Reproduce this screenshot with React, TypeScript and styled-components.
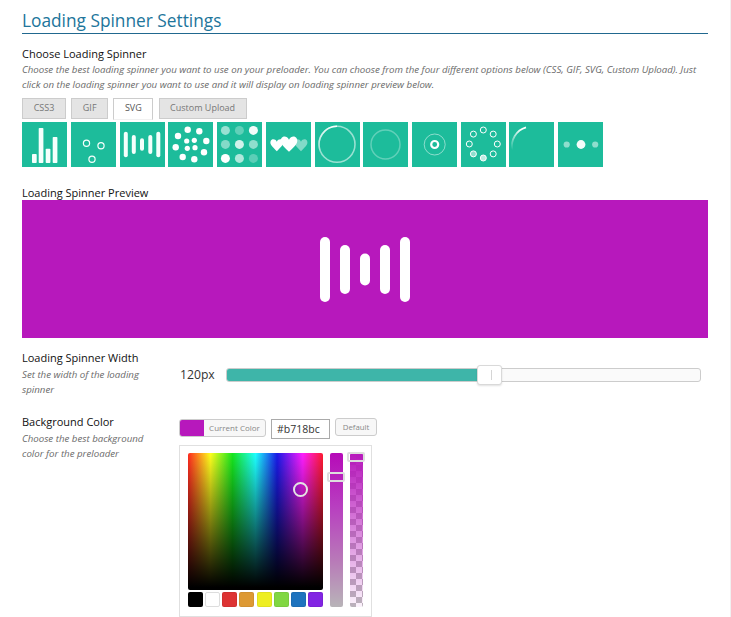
import * as React from 'react';
import styled, { createGlobalStyle } from 'styled-components';

const GlobalStyle = createGlobalStyle`
    html, body {
        margin: 0;
        padding: 0;
        background: #ffffff;
    }
    body {
        font-family: "Open Sans", "Liberation Sans", sans-serif;
        color: #222222;
    }
`;

const Page = styled.div`
    box-sizing: border-box;
    width: 731px;
    height: 617px;
    padding: 11px 22px 0 22px;
    border-right: 1px solid #f1f1f1;
    overflow: hidden;
`;

const Title = styled.h2`
    margin: 0;
    height: 22px;
    border-bottom: 1px solid #21688f;
    font-size: 17.3px;
    font-weight: 400;
    line-height: 20px;
    color: #21759b;
`;

const SectionLabel = styled.h3`
    margin: 12px 0 0;
    font-size: 11px;
    font-weight: 400;
    line-height: 16px;
    color: #111111;
`;

const Hint = styled.p`
    margin: 0;
    font-size: 9.7px;
    font-style: italic;
    line-height: 15px;
    color: #6a6a6a;
`;

const Tabs = styled.div`
    display: flex;
    gap: 5.2px;
    height: 22px;
    margin-top: 6px;
`;

const Tab = styled.div<{ $active?: boolean; $width: number }>`
    box-sizing: border-box;
    width: ${(p) => p.$width}px;
    height: ${(p) => (p.$active ? 22 : 21)}px;
    border: 1px solid #cccccc;
    border-bottom-color: ${(p) => (p.$active ? '#f1f1f1' : '#cccccc')};
    background: ${(p) => (p.$active ? '#ffffff' : '#e4e4e4')};
    font-size: 9px;
    line-height: 17px;
    text-align: center;
    color: ${(p) => (p.$active ? '#555555' : '#777777')};
`;

const SpinnerGrid = styled.div`
    display: flex;
    gap: 3.73px;
    margin: 2px 0 0 0.3px;
`;

const SpinnerTile = styled.svg`
    display: block;
    flex: none;
    width: 45px;
    height: 45px;
    background: #1dbc9b;
`;

const PreviewLabel = styled.h3`
    margin: 19px 0 0;
    font-size: 11px;
    font-weight: 400;
    line-height: 14px;
    color: #111111;
`;

const Preview = styled.div`
    display: flex;
    align-items: center;
    justify-content: center;
    height: 138px;
    background: #b718bc;
`;

const SettingRow = styled.div<{ $top: number }>`
    display: flex;
    margin-top: ${(p) => p.$top}px;
`;

const SettingInfo = styled.div`
    flex: none;
    width: 157px;
`;

const SettingName = styled.h4`
    margin: 0 0 2px;
    font-size: 11px;
    font-weight: 400;
    line-height: 15px;
    color: #111111;
`;

const SettingHint = styled(Hint)`
    width: 130px;
`;

const SliderControl = styled.div`
    display: flex;
    align-items: center;
    gap: 12px;
    flex: 1;
    height: 19px;
    margin: 15px 7px 0 0;
    padding-left: 1px;
`;

const SliderValue = styled.span`
    flex: none;
    width: 34px;
    font-size: 12.2px;
    color: #333333;
`;

const SliderTrack = styled.div`
    position: relative;
    box-sizing: border-box;
    flex: 1;
    height: 14px;
    border: 1px solid #cccccc;
    border-radius: 3px;
    background: #fafafa;
`;

const SliderFill = styled.div`
    height: 100%;
    border-radius: 2px 0 0 2px;
    background: #3eb5a9;
`;

const SliderThumb = styled.div`
    position: absolute;
    top: -4px;
    box-sizing: border-box;
    width: 25px;
    height: 20px;
    border: 1px solid #d9d9d9;
    border-radius: 3px;
    background: #ffffff;
    box-shadow: 0 1px 2px rgba(0, 0, 0, 0.12);

    &::after {
        content: '';
        position: absolute;
        left: 13px;
        top: 4px;
        width: 1px;
        height: 10px;
        background: #d5d5d5;
    }
`;

const ColorColumn = styled.div`
    flex: none;
    width: 200px;
    padding-top: 4px;
`;

const ColorTopRow = styled.div`
    display: flex;
    align-items: flex-start;
    gap: 5px;
    height: 27px;
`;

const CurrentColor = styled.div`
    box-sizing: border-box;
    display: flex;
    width: 87px;
    height: 18px;
    margin-top: 1px;
    border: 1px solid #cccccc;
    border-radius: 3px;
    background: #f7f7f7;
    overflow: hidden;
`;

const CurrentSwatch = styled.div`
    flex: none;
    width: 24px;
    background: #b718bc;
`;

const CurrentText = styled.span`
    flex: 1;
    font-size: 8px;
    line-height: 16px;
    text-align: center;
    color: #888888;
`;

const HexField = styled.div`
    box-sizing: border-box;
    width: 59px;
    height: 20px;
    margin-top: 1px;
    padding-left: 5px;
    border: 1px solid #aaaaaa;
    font-size: 10.5px;
    line-height: 18px;
    color: #333333;
`;

const DefaultButton = styled.div`
    box-sizing: border-box;
    width: 42px;
    height: 18px;
    border: 1px solid #cccccc;
    border-radius: 3px;
    background: #f7f7f7;
    font-size: 7.8px;
    line-height: 16px;
    text-align: center;
    color: #888888;
`;

const Picker = styled.div`
    box-sizing: border-box;
    display: flex;
    gap: 7px;
    width: 193px;
    height: 172px;
    padding: 7px 8px;
    border: 1px solid #e0e0e0;
`;

const PickerMain = styled.div`
    display: flex;
    flex-direction: column;
    gap: 2px;
    width: 136px;
`;

const ColorField = styled.div`
    position: relative;
    height: 137px;
    border-radius: 2px;
    background:
        linear-gradient(to bottom, rgba(0, 0, 0, 0) 0%, rgba(0, 0, 0, 0.45) 45%, #000000 98%),
        linear-gradient(to right, #ff2a20 0%, #ffff1e 16.6%, #16e61e 33%, #1effff 50%, #1a1ae8 66%, #ff1eff 85%, #ff1a30 100%);
`;

const FieldRing = styled.div`
    position: absolute;
    left: 105px;
    top: 29px;
    box-sizing: border-box;
    width: 15px;
    height: 15px;
    border: 2px solid #e4e4e4;
    border-radius: 50%;
`;

const Swatches = styled.div`
    display: flex;
    justify-content: space-between;
`;

const Swatch = styled.div<{ $color: string }>`
    box-sizing: border-box;
    width: 15px;
    height: 15px;
    border: 1px solid rgba(0, 0, 0, 0.06);
    border-radius: 2px;
    background: ${(p) => p.$color};
`;

const WhiteSwatch = styled(Swatch)`
    border-color: #dddddd;
`;

const VerticalBar = styled.div`
    position: relative;
    flex: none;
    width: 13px;
    height: 154px;
    border-radius: 2px;
`;

const LightnessBar = styled(VerticalBar)`
    background: linear-gradient(to bottom, #b60ab8 0%, #b83fc0 35%, #b87ab8 70%, #b8b4b8 100%);
`;

const AlphaBar = styled(VerticalBar)`
    background:
        linear-gradient(to bottom, rgba(183, 24, 188, 1) 0%, rgba(183, 24, 188, 0.05) 100%),
        repeating-conic-gradient(#bbbbbb 0% 25%, #ffffff 0% 50%) 0 0 / 12px 12px;
`;

const BarHandle = styled.div<{ $top: number }>`
    position: absolute;
    left: -3px;
    top: ${(p) => p.$top}px;
    box-sizing: border-box;
    width: 18px;
    height: 10px;
    border: 2px solid #dddddd;
    border-radius: 2px;
    background: transparent;
`;

const SWATCHES = ['#000000', '#ffffff', '#dd3333', '#dd9933', '#eeee22', '#81d742', '#1e73be', '#8224e3'];

const Spinner1 = () => (
    <SpinnerTile viewBox="0 0 45 45">
        <rect x="10" y="32" width="4.7" height="9" rx="0.8" fill="#f5fffc" />
        <rect x="16.7" y="6" width="4.7" height="35" rx="0.8" fill="#f5fffc" />
        <rect x="23.7" y="26.7" width="4.7" height="14.3" rx="0.8" fill="#f5fffc" />
        <rect x="30.7" y="15" width="4.7" height="26" rx="0.8" fill="#f5fffc" />
    </SpinnerTile>
);

const Spinner2 = () => (
    <SpinnerTile viewBox="0 0 45 45">
        <g fill="none" stroke="#f5fffc" strokeWidth="1.2">
            <circle cx="15.5" cy="21.3" r="3.1" />
            <circle cx="30" cy="23.7" r="3.1" />
            <circle cx="21" cy="37.3" r="3.1" />
        </g>
    </SpinnerTile>
);

const Spinner3 = () => (
    <SpinnerTile viewBox="0 0 45 45">
        <g fill="#f5fffc">
            <rect x="3.8" y="9.7" width="4" height="25.6" rx="2" />
            <rect x="11.8" y="13" width="4" height="19" rx="2" />
            <rect x="20" y="16.3" width="4" height="12.4" rx="2" />
            <rect x="28.3" y="13" width="4" height="19" rx="2" />
            <rect x="36.3" y="9.7" width="4" height="25.6" rx="2" />
        </g>
    </SpinnerTile>
);

const Spinner4 = () => {
    const outer = [[19.7, 7.7], [31.3, 9.3], [10, 14], [38.3, 19], [7.7, 25.3], [36, 30.3], [14.7, 35], [26.3, 37.3]];
    const inner = [[18.7, 19], [26.3, 18.3], [19.3, 26.3], [27, 25.7]];
    return (
        <SpinnerTile viewBox="0 0 45 45">
            {outer.map(([x, y]) => <circle key={`${x}-${y}`} cx={x} cy={y} r="3.2" fill="#ffffff" />)}
            {inner.map(([x, y]) => <circle key={`${x}-${y}`} cx={x} cy={y} r="2.6" fill="#ffffff" />)}
        </SpinnerTile>
    );
};

const Spinner5 = () => {
    const alpha = [0.55, 0.3, 0.95, 0.45, 0.8, 0.5, 1, 0.65, 0.28];
    return (
        <SpinnerTile viewBox="0 0 45 45">
            {alpha.map((a, i) => (
                <circle key={i} cx={8.4 + (i % 3) * 14} cy={8.4 + Math.floor(i / 3) * 14} r="4.5" fill="#ffffff" fillOpacity={a} />
            ))}
        </SpinnerTile>
    );
};

const HEART = 'M0 -3.6C-1 -5.8 -3.2 -6.4 -4.6 -5.6C-6.4 -4.6 -6.6 -2.2 -5.4 -0.4C-4.2 1.6 -1.8 3.6 0 5.4C1.8 3.6 4.2 1.6 5.4 -0.4C6.6 -2.2 6.4 -4.6 4.6 -5.6C3.2 -6.4 1 -5.8 0 -3.6Z';

const Spinner6 = () => (
    <SpinnerTile viewBox="0 0 45 45">
        <path d={HEART} transform="translate(35 23.5) scale(1.05)" fill="#ffffff" fillOpacity="0.45" />
        <path d={HEART} transform="translate(10.8 23.5) scale(1.05)" fill="#ffffff" />
        <path d={HEART} transform="translate(23 22.5) scale(1.35)" fill="#ffffff" />
    </SpinnerTile>
);

const Spinner7 = () => (
    <SpinnerTile viewBox="0 0 45 45">
        <defs>
            <linearGradient id="ringFade" gradientUnits="userSpaceOnUse" x1="22" y1="4" x2="4" y2="30">
                <stop offset="0" stopColor="#ffffff" />
                <stop offset="1" stopColor="#ffffff" stopOpacity="0.1" />
            </linearGradient>
        </defs>
        <circle cx="22" cy="22.3" r="18" fill="none" stroke="#ffffff" strokeOpacity="0.55" strokeWidth="1.6" />
        <path d="M22 4.3A18 18 0 0 0 5 28" fill="none" stroke="url(#ringFade)" strokeWidth="1.6" />
    </SpinnerTile>
);

const Spinner8 = () => (
    <SpinnerTile viewBox="0 0 45 45">
        <circle cx="22.5" cy="22.5" r="14.5" fill="none" stroke="#ffffff" strokeOpacity="0.3" strokeWidth="1.5" />
    </SpinnerTile>
);

const Spinner9 = () => (
    <SpinnerTile viewBox="0 0 45 45">
        <circle cx="22.7" cy="22.5" r="10.5" fill="none" stroke="#ffffff" strokeOpacity="0.7" strokeWidth="0.7" />
        <circle cx="22.7" cy="22.5" r="3.5" fill="none" stroke="#ffffff" strokeWidth="2.2" />
    </SpinnerTile>
);

const Spinner10 = () => {
    const fills = [0, 0, 0, 0, 0.7, 0.5, 0, 0];
    return (
        <SpinnerTile viewBox="0 0 45 45">
            {fills.map((fill, i) => {
                const angle = (i * Math.PI) / 4;
                return (
                    <circle
                        key={i}
                        cx={22.3 + 14 * Math.sin(angle)}
                        cy={22 - 14 * Math.cos(angle)}
                        r="3"
                        fill="#ffffff"
                        fillOpacity={fill}
                        stroke="#ffffff"
                        strokeWidth="1"
                    />
                );
            })}
        </SpinnerTile>
    );
};

const Spinner11 = () => (
    <SpinnerTile viewBox="0 0 45 45">
        <defs>
            <linearGradient id="arcFade" gradientUnits="userSpaceOnUse" x1="17" y1="5" x2="3" y2="28">
                <stop offset="0.15" stopColor="#ffffff" />
                <stop offset="1" stopColor="#ffffff" stopOpacity="0" />
            </linearGradient>
        </defs>
        <path d="M17 5.4A19.5 19.5 0 0 0 3.3 28" fill="none" stroke="url(#arcFade)" strokeWidth="1.8" />
    </SpinnerTile>
);

const Spinner12 = () => (
    <SpinnerTile viewBox="0 0 45 45">
        <circle cx="8.7" cy="22.5" r="3.1" fill="#ffffff" fillOpacity="0.5" />
        <circle cx="23" cy="22.5" r="4.4" fill="#ffffff" fillOpacity="0.95" />
        <circle cx="37.2" cy="22.5" r="3.1" fill="#ffffff" fillOpacity="0.5" />
    </SpinnerTile>
);

const PreviewBars = () => (
    <svg width="90" height="65" viewBox="0 0 90 65" fill="#ffffff">
        <rect x="0" y="0" width="10" height="65" rx="5" />
        <rect x="20" y="8" width="10" height="49" rx="5" />
        <rect x="40" y="16.5" width="10" height="32" rx="5" />
        <rect x="60" y="8" width="10" height="49" rx="5" />
        <rect x="80" y="0" width="10" height="65" rx="5" />
    </svg>
);

const App: React.FunctionComponent = () => {
    return (
        <Page>
            <GlobalStyle />
            <Title>Loading Spinner Settings</Title>

            <SectionLabel>Choose Loading Spinner</SectionLabel>
            <Hint>
                Choose the best loading spinner you want to use on your preloader. You can choose from the four different options below (CSS, GIF, SVG, Custom Upload). Just click on the loading spinner you want to use and it will display on loading spinner preview below.
            </Hint>

            <Tabs>
                <Tab $width={44}>CSS3</Tab>
                <Tab $width={37}>GIF</Tab>
                <Tab $width={40} $active>SVG</Tab>
                <Tab $width={88}>Custom Upload</Tab>
            </Tabs>

            <SpinnerGrid>
                <Spinner1 />
                <Spinner2 />
                <Spinner3 />
                <Spinner4 />
                <Spinner5 />
                <Spinner6 />
                <Spinner7 />
                <Spinner8 />
                <Spinner9 />
                <Spinner10 />
                <Spinner11 />
                <Spinner12 />
            </SpinnerGrid>

            <PreviewLabel>Loading Spinner Preview</PreviewLabel>
            <Preview>
                <PreviewBars />
            </Preview>

            <SettingRow $top={12}>
                <SettingInfo>
                    <SettingName>Loading Spinner Width</SettingName>
                    <SettingHint>Set the width of the loading spinner</SettingHint>
                </SettingInfo>
                <SliderControl>
                    <SliderValue>120px</SliderValue>
                    <SliderTrack>
                        <SliderFill style={{ width: '53%' }} />
                        <SliderThumb style={{ left: '52.8%' }} />
                    </SliderTrack>
                </SliderControl>
            </SettingRow>

            <SettingRow $top={17}>
                <SettingInfo>
                    <SettingName>Background Color</SettingName>
                    <SettingHint>Choose the best background color for the preloader</SettingHint>
                </SettingInfo>
                <ColorColumn>
                    <ColorTopRow>
                        <CurrentColor>
                            <CurrentSwatch />
                            <CurrentText>Current Color</CurrentText>
                        </CurrentColor>
                        <HexField>#b718bc</HexField>
                        <DefaultButton>Default</DefaultButton>
                    </ColorTopRow>
                    <Picker>
                        <PickerMain>
                            <ColorField>
                                <FieldRing />
                            </ColorField>
                            <Swatches>
                                {SWATCHES.map((c) =>
                                    c === '#ffffff' ? <WhiteSwatch key={c} $color={c} /> : <Swatch key={c} $color={c} />
                                )}
                            </Swatches>
                        </PickerMain>
                        <LightnessBar>
                            <BarHandle $top={19} />
                        </LightnessBar>
                        <AlphaBar>
                            <BarHandle $top={-1} />
                        </AlphaBar>
                    </Picker>
                </ColorColumn>
            </SettingRow>
        </Page>
    );
};

export default App;
